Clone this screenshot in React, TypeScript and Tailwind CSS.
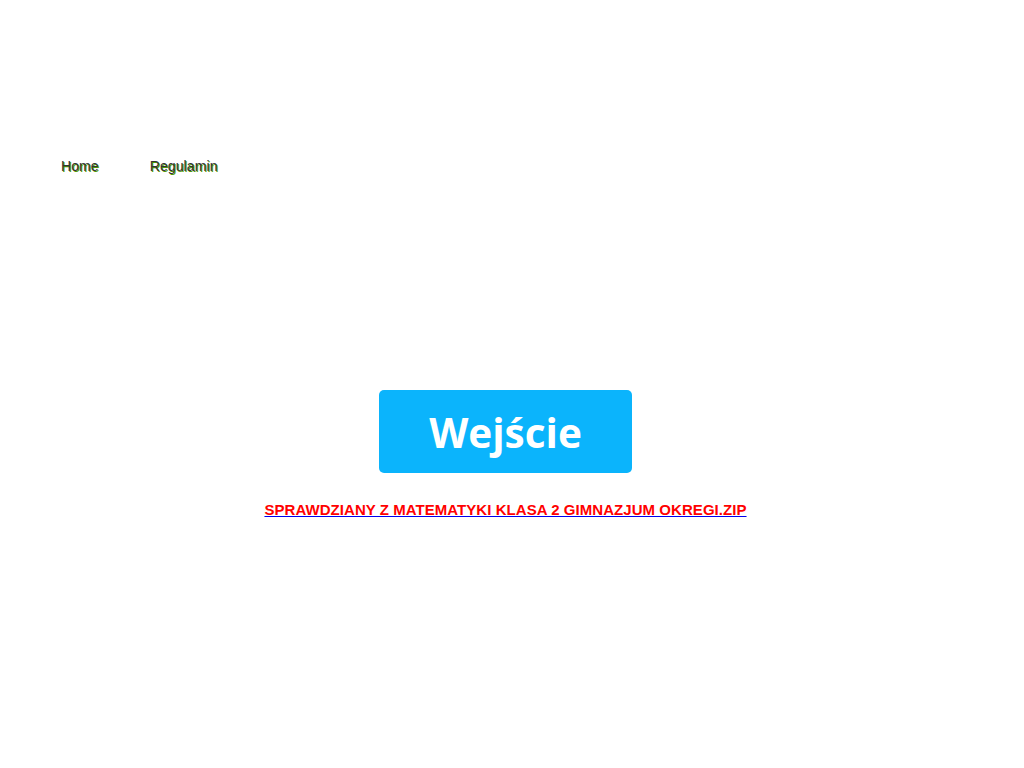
import React from 'react';

const navItems = ['Home', 'Regulamin'];

const App: React.FC = () => {
  return (
    <div className="min-h-[768px] bg-white font-['Liberation_Sans',Arial,sans-serif]">
      {/* Top menu */}
      <nav className="flex gap-[51px] pl-[61px] pt-[157px]">
        {navItems.map((item) => (
          <a
            key={item}
            href="#"
            className="text-[14px] leading-[18px] tracking-[0.1px] text-[#333333] [text-shadow:1px_1px_0_#4f9a00]"
          >
            {item}
          </a>
        ))}
      </nav>

      {/* Entry */}
      <div className="mr-[13px] flex flex-col items-center pt-[215px]">
        <a
          href="#"
          className="flex h-[83px] w-[253px] items-center justify-center rounded-[5px] bg-[#0bb4fc] pt-[3px] font-['Open_Sans',sans-serif] text-[40.5px] font-bold text-white"
        >
          Wejście
        </a>
        <a
          href="#"
          className="mt-[28px] text-[15px] font-bold leading-[18px] tracking-[0.05px] text-[#ff0000] underline decoration-[#0000ee]"
        >
          SPRAWDZIANY Z MATEMATYKI KLASA 2 GIMNAZJUM OKREGI.ZIP
        </a>
      </div>
    </div>
  );
};

export default App;
